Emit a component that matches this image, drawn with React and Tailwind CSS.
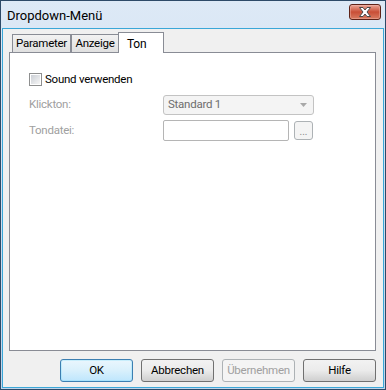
import React from "react";

const Tab = ({ label, active, w }) =>
  active ? (
    <div className="relative z-10 -mb-px -ml-px flex h-[21px] w-[46px] items-start border border-b-0 border-[#898c95] bg-white pl-[8px] pt-[2px] text-[12px] text-black">
      {label}
    </div>
  ) : (
    <div
      className={`flex h-[18px] items-center justify-center border border-b-0 border-[#898c95] bg-gradient-to-b from-[#f2f2f2] to-[#e0e0e0] text-black ${w}`}
    >
      {label}
    </div>
  );

const Button = ({ label, focus, disabled }) => {
  if (disabled)
    return (
      <div className="flex h-[23px] w-[73px] items-center justify-center rounded-[3px] border border-[#adb2b5] bg-[#f4f4f4] text-[#a0a0a0]">
        {label}
      </div>
    );
  return (
    <div
      className={`flex h-[23px] w-[73px] items-center justify-center rounded-[3px] border text-black ${
        focus
          ? "border-[#3c7fb1] bg-gradient-to-b from-[#eaf6fd] via-[#d9f0fc] to-[#bee6fd] shadow-[inset_0_0_0_1px_#48d3fb33]"
          : "border-[#707070] bg-gradient-to-b from-[#f2f2f2] via-[#ebebeb] to-[#cfcfcf]"
      }`}
    >
      {label}
    </div>
  );
};

export default function App() {
  return (
    <div className="flex h-[390px] w-[386px] flex-col border border-[#2d4a68] bg-gradient-to-b from-[#dde9f6] to-[#bfd4ea] font-['Roboto',sans-serif] text-[11.5px] tracking-[-0.25px]">
      {/* Title bar */}
      <div className="flex h-[27px] items-start justify-between pl-[6px] pr-[4px]">
        <span className="mt-[5px] text-[13px] tracking-normal text-black">Dropdown-Menü</span>
        <div className="mt-[3px] flex h-[16px] w-[32px] items-center justify-center rounded-[3px] border border-[#5e2318] bg-gradient-to-b from-[#eaa596] via-[#c84e36] to-[#d87a60] shadow-[inset_0_0_0_1px_#f3c4b866]">
          <svg width="14" height="10" viewBox="0 0 14 10">
            <path
              d="M1.5 0.5 H5 L7 3 L9 0.5 H12.5 L9 5 L12.5 9.5 H9 L7 7 L5 9.5 H1.5 L5 5 Z"
              fill="#ffffff"
              stroke="#4a4a4a"
              strokeWidth="1"
              strokeLinejoin="round"
            />
          </svg>
        </div>
      </div>

      {/* Client area */}
      <div className="mx-px mb-px flex flex-1 flex-col border border-[#3aa7d8] bg-[#f0f0f0] pb-[5px]">
        <div className="ml-[6px] mr-[7px] mt-[3px] flex flex-1 flex-col">
          {/* Tabs */}
          <div className="flex items-end pl-[3px]">
            <Tab label="Parameter" w="w-[59px]" />
            <Tab label="Anzeige" w="w-[48px]" />
            <Tab label="Ton" active />
          </div>

          {/* Panel */}
          <div className="flex-1 border border-[#898c95] bg-white pl-[19px] pt-[20px]">
            <div className="flex h-[13px] items-center gap-[3px]">
              <div className="h-[13px] w-[13px] border border-[#8e8f8f] bg-white p-px">
                <div className="h-full w-full bg-gradient-to-br from-[#cbcfd5] to-[#f6f6f6]" />
              </div>
              <span className="text-black">Sound verwenden</span>
            </div>

            <div className="mt-[9px] flex items-center">
              <span className="w-[134px] text-[#a0a0a0]">Klickton:</span>
              <div className="flex h-[20px] w-[151px] items-center justify-between rounded-[3px] border border-[#c3c3c3] bg-[#f4f4f4] pl-[4px] pr-[6px] text-[#6d6d6d]">
                <span>Standard 1</span>
                <svg width="7" height="4" viewBox="0 0 7 4">
                  <path d="M0 0 H7 L3.5 4 Z" fill="#a8a8a8" />
                </svg>
              </div>
            </div>

            <div className="mt-[5px] flex items-center">
              <span className="w-[134px] text-[#a0a0a0]">Tondatei:</span>
              <div className="h-[21px] w-[126px] rounded-[2px] border border-[#b5b5b5] bg-white" />
              <div className="ml-[5px] flex h-[19px] w-[19px] items-end justify-center rounded-[3px] border border-[#adb2b5] bg-[#f4f4f4] pb-[2px] text-[10px] leading-none tracking-normal text-[#8a8a8a]">
                ...
              </div>
            </div>
          </div>

          {/* Buttons */}
          <div className="mt-[8px] flex justify-end gap-[8px]">
            <Button label="OK" focus />
            <Button label="Abbrechen" />
            <Button label="Übernehmen" disabled />
            <Button label="Hilfe" />
          </div>
        </div>
      </div>
    </div>
  );
}
